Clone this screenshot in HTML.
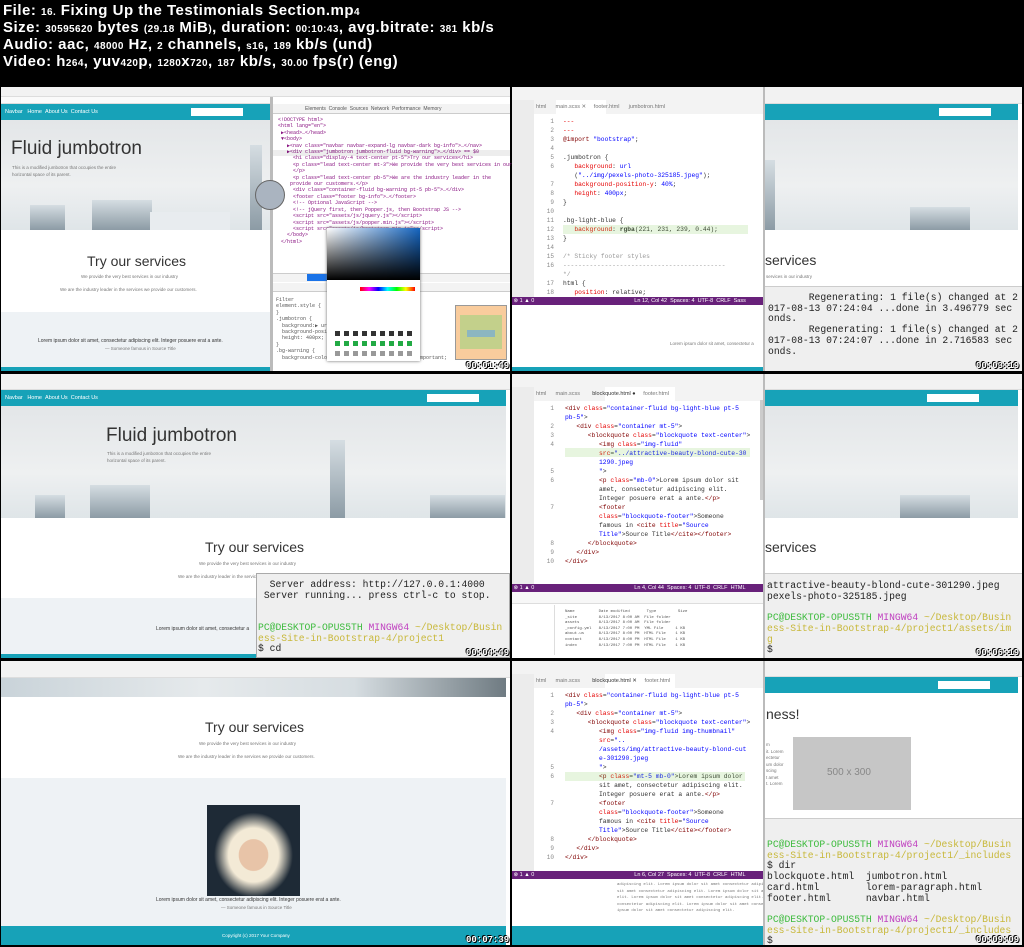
<!DOCTYPE html>
<html><head><meta charset="utf-8"><style>
*{margin:0;padding:0;box-sizing:border-box}
body{width:1024px;height:947px;background:#000;position:relative;overflow:hidden;font-family:"Liberation Sans",sans-serif}
.a{position:absolute}
.hd{color:#fff;font-weight:bold;font-size:15px;left:3px;white-space:nowrap;letter-spacing:0.5px}
.hd small{font-size:10px;letter-spacing:0.4px}
.w{background:#fff}
.tb{background:#f2f2f2;border-bottom:1px solid #ddd}
.teal{background:#17a2b8}
.grey{background:#eef2f5}
.code{font-family:"Liberation Mono",monospace;font-size:6.3px;line-height:9px;color:#333;white-space:pre}
.ln{font-family:"Liberation Mono",monospace;font-size:6px;line-height:9px;color:#888;text-align:right;white-space:pre}
.kw{color:#800000}.at{color:#e50000}.st{color:#0000ff}.tg{color:#800000}
.vs-act{background:#ececec}
.status{background:#68217a;color:#fff;font-size:5.5px;line-height:8px;white-space:nowrap}
.term{background:#efefef}
.tt{font-family:"Liberation Mono",monospace;font-size:9.7px;line-height:10.7px;color:#222;white-space:pre}
.g{color:#3dbb3d}.m{color:#c040c0}.y{color:#c8b83a}
.ts{color:#fff;font-family:"Liberation Mono",monospace;font-weight:bold;font-size:9px;text-shadow:0 0 1px #000,1px 1px 0 #000,-1px -1px 0 #000;white-space:nowrap}
.sky{background:linear-gradient(#e3e6e8,#eef0f1 60%,#dfe5e8)}
.city{background:linear-gradient(#d5dde2,#8c9ba5)}
.h1l{font-weight:300;color:#333}
.small{font-size:4.5px;color:#777;white-space:nowrap}
.nav{color:#fff;font-size:5px;white-space:nowrap}
.dv{font-family:"Liberation Mono",monospace;font-size:5px;line-height:6.4px;color:#881280;white-space:pre}
</style></head><body>

<div class="a hd" style="top:2px">File: <small>16.</small> Fixing Up the Testimonials Section.mp<small>4</small></div>
<div class="a hd" style="top:19px">Size: <small>30595620</small> bytes <small>(29.18</small> MiB<small>)</small>, duration: <small>00:10:43</small>, avg.bitrate: <small>381</small> kb/s</div>
<div class="a hd" style="top:36px">Audio: aac, <small>48000</small> Hz, <small>2</small> channels, <small>s16</small>, <small>189</small> kb/s (und)</div>
<div class="a hd" style="top:53px">Video: h<small>264</small>, yuv<small>420</small>p, <small>1280</small>x<small>720</small>, <small>187</small> kb/s, <small>30.00</small> fps(r) (eng)</div>

<!-- ===== Frame A ===== -->
<div class="a w" style="left:1px;top:87px;width:509px;height:284px"></div>
<div class="a tb" style="left:1px;top:87px;width:509px;height:10px"></div>
<div class="a" style="left:1px;top:97px;width:270px;height:7px;background:#fafafa;border-bottom:1px solid #ddd"></div>
<div class="a teal" style="left:1px;top:104px;width:269px;height:16px"></div>
<div class="a nav" style="left:5px;top:109px;font-size:5.5px">Navbar &nbsp;&nbsp;Home &nbsp;About Us &nbsp;Contact Us</div>
<div class="a w" style="left:191px;top:108px;width:52px;height:8px"></div>
<div class="a sky" style="left:1px;top:120px;width:269px;height:110px"></div>
<div class="a city" style="left:30px;top:205px;width:35px;height:25px"></div>
<div class="a city" style="left:92px;top:200px;width:60px;height:30px"></div>
<div class="a city" style="left:250px;top:145px;width:12px;height:85px"></div>
<div class="a" style="left:150px;top:212px;width:80px;height:18px;background:#e8ecef"></div>
<div class="a h1l" style="left:11px;top:138px;font-size:19px;white-space:nowrap">Fluid jumbotron</div>
<div class="a small" style="left:12px;top:165px">This is a modified jumbotron that occupies the entire</div>
<div class="a small" style="left:12px;top:172px">horizontal space of its parent.</div>
<div class="a h1l" style="left:87px;top:253px;font-size:14px;white-space:nowrap">Try our services</div>
<div class="a small" style="left:81px;top:274px">We provide the very best services in our industry</div>
<div class="a small" style="left:60px;top:287px">We are the industry leader in the services we provide our customers.</div>
<div class="a grey" style="left:1px;top:312px;width:269px;height:55px"></div>
<div class="a" style="left:38px;top:338px;font-size:5px;color:#333;white-space:nowrap">Lorem ipsum dolor sit amet, consectetur adipiscing elit. Integer posuere erat a ante.</div>
<div class="a small" style="left:105px;top:346px">— Someone famous in Source Title</div>
<div class="a teal" style="left:1px;top:367px;width:269px;height:4px"></div>
<div class="a" style="left:270px;top:97px;width:3px;height:274px;background:#bbb"></div>
<div class="a" style="left:273px;top:104px;width:237px;height:10px;background:#f3f3f3;border-bottom:1px solid #ccc"></div>
<div class="a nav" style="left:305px;top:106px;color:#555">Elements &nbsp;Console &nbsp;Sources &nbsp;Network &nbsp;Performance &nbsp;Memory</div>
<div class="a dv" style="left:278px;top:117px">&lt;!DOCTYPE html&gt;
&lt;html lang="en"&gt;
 ▶&lt;head&gt;…&lt;/head&gt;
 ▼&lt;body&gt;
   ▶&lt;nav class="navbar navbar-expand-lg navbar-dark bg-info"&gt;…&lt;/nav&gt;
   ▶&lt;div class="jumbotron jumbotron-fluid bg-warning"&gt;…&lt;/div&gt; == $0
     &lt;h1 class="display-4 text-center pt-5"&gt;Try our services&lt;/h1&gt;
     &lt;p class="lead text-center mt-3"&gt;We provide the very best services in our
     &lt;/p&gt;
     &lt;p class="lead text-center pb-5"&gt;We are the industry leader in the
    provide our customers.&lt;/p&gt;
     &lt;div class="container-fluid bg-warning pt-5 pb-5"&gt;…&lt;/div&gt;
     &lt;footer class="footer bg-info"&gt;…&lt;/footer&gt;
     &lt;!-- Optional JavaScript --&gt;
     &lt;!-- jQuery first, then Popper.js, then Bootstrap JS --&gt;
     &lt;script src="assets/js/jquery.js"&gt;&lt;/script&gt;
     &lt;script src="assets/js/popper.min.js"&gt;&lt;/script&gt;
     &lt;script src="assets/js/bootstrap.min.js"&gt;&lt;/script&gt;
   &lt;/body&gt;
 &lt;/html&gt;</div>
<div class="a" style="left:273px;top:150px;width:237px;height:6px;background:rgba(0,0,0,.07)"></div>
<div class="a" style="left:255px;top:180px;width:30px;height:30px;border-radius:50%;background:#aab4c0;border:1px solid #666"></div>
<div class="a" style="left:273px;top:273px;width:237px;height:9px;background:#f3f3f3;border-top:1px solid #ccc"></div>
<div class="a" style="left:307px;top:274px;width:20px;height:7px;background:#1a73e8"></div>
<div class="a" style="left:273px;top:283px;width:237px;height:9px;background:#f3f3f3;border-bottom:1px solid #ccc"></div>
<div class="a dv" style="left:276px;top:297px;color:#555">Filter
element.style {
}
.jumbotron {
  background:▶ url
  background-posit
  height: 400px;
}
.bg-warning {
  background-color: rgba(230, 234, 239, 0.44) !important;</div>
<div class="a" style="left:327px;top:228px;width:93px;height:133px;background:#fff;box-shadow:0 0 3px #666"></div>
<div class="a" style="left:327px;top:228px;width:93px;height:52px;background:linear-gradient(to top,#000,rgba(0,0,0,0)),linear-gradient(to right,#fff,#1565c0)"></div>
<div class="a" style="left:360px;top:287px;width:55px;height:4px;background:linear-gradient(to right,#f00,#f0f,#00f,#0ff,#0f0,#ff0,#f00)"></div>
<div class="a" style="left:335px;top:331px;width:80px;height:5px;background:repeating-linear-gradient(to right,#333 0 5px,transparent 5px 9px)"></div>
<div class="a" style="left:335px;top:341px;width:80px;height:5px;background:repeating-linear-gradient(to right,#2a4 0 5px,transparent 5px 9px)"></div>
<div class="a" style="left:335px;top:351px;width:80px;height:5px;background:repeating-linear-gradient(to right,#999 0 5px,transparent 5px 9px)"></div>
<div class="a" style="left:455px;top:305px;width:52px;height:55px;background:#f9cc9d;border:1px solid #999"></div>
<div class="a" style="left:460px;top:315px;width:42px;height:34px;background:#c3d08b"></div>
<div class="a" style="left:467px;top:330px;width:28px;height:7px;background:#8cb6c0"></div>
<div class="a ts" style="left:466px;top:361px">00:01:49</div>

<!-- ===== Frame B ===== -->
<div class="a w" style="left:512px;top:87px;width:510px;height:284px"></div>
<div class="a" style="left:512px;top:87px;width:251px;height:13px;background:#f3f3f3"></div>
<div class="a vs-act" style="left:512px;top:100px;width:22px;height:198px"></div>
<div class="a" style="left:534px;top:100px;width:229px;height:14px;background:#f3f3f3"></div>
<div class="a" style="left:556px;top:100px;width:50px;height:14px;background:#fff"></div>
<div class="a nav" style="left:536px;top:104px;color:#777;font-size:5.5px">html &nbsp;&nbsp;&nbsp;&nbsp;&nbsp;main.scss ✕ &nbsp;&nbsp;&nbsp;&nbsp;footer.html &nbsp;&nbsp;&nbsp;&nbsp;&nbsp;jumbotron.html</div>
<div class="a ln" style="left:540px;top:117px;width:14px">1
2
3
4
5
6

7
8
9
10
11
12
13
14
15
16

17
18</div>
<div class="a code" style="left:563px;top:117px"><span class="at">---</span>
<span class="at">---</span>
<span class="kw">@import</span> <span class="st">"bootstrap"</span>;

.jumbotron {
   <span class="at">background</span>: <span class="st">url</span>
   (<span class="st">"../img/pexels-photo-325185.jpeg"</span>);
   <span class="at">background-position-y</span>: <span class="st">40%</span>;
   <span class="at">height</span>: <span class="st">400px</span>;
}

.bg-light-blue {
   <span class="at">background</span>: <b>rgba</b>(221, 231, 239, 0.44);
}

<span style="color:#999">/* Sticky footer styles</span>
<span style="color:#999">-------------------------------------------</span>
<span style="color:#999">*/</span>
html {
   <span class="at">position</span>: relative;</div>
<div class="a" style="left:563px;top:225px;width:185px;height:9px;background:rgba(120,200,80,.18)"></div>
<div class="a status" style="left:512px;top:297px;width:251px;height:8px">&nbsp;⊗ 1 ▲ 0<span style="margin-left:100px">Ln 12, Col 42 &nbsp;Spaces: 4 &nbsp;UTF-8 &nbsp;CRLF &nbsp;Sass</span></div>
<div class="a small" style="left:670px;top:341px">Lorem ipsum dolor sit amet, consectetur a</div>
<div class="a teal" style="left:512px;top:367px;width:251px;height:4px"></div>
<div class="a" style="left:763px;top:87px;width:2px;height:284px;background:#bbb"></div>
<div class="a tb" style="left:765px;top:87px;width:257px;height:17px"></div>
<div class="a teal" style="left:765px;top:104px;width:253px;height:16px"></div>
<div class="a w" style="left:939px;top:108px;width:52px;height:8px"></div>
<div class="a sky" style="left:765px;top:120px;width:253px;height:110px"></div>
<div class="a city" style="left:910px;top:207px;width:60px;height:23px"></div>
<div class="a city" style="left:765px;top:160px;width:10px;height:70px"></div>
<div class="a h1l" style="left:765px;top:252px;font-size:14px">services</div>
<div class="a small" style="left:766px;top:274px">services in our industry</div>
<div class="a term" style="left:765px;top:286px;width:257px;height:85px;border-top:1px solid #ccc"></div>
<div class="a tt" style="left:768px;top:293px">       Regenerating: 1 file(s) changed at 2
017-08-13 07:24:04 ...done in 3.496779 sec
onds.
       Regenerating: 1 file(s) changed at 2
017-08-13 07:24:07 ...done in 2.716583 sec
onds.</div>
<div class="a ts" style="left:976px;top:361px">00:03:19</div>

<!-- ===== Frame C ===== -->
<div class="a w" style="left:1px;top:374px;width:509px;height:284px"></div>
<div class="a tb" style="left:1px;top:374px;width:509px;height:16px"></div>
<div class="a teal" style="left:1px;top:390px;width:505px;height:16px"></div>
<div class="a nav" style="left:5px;top:395px;font-size:5.5px">Navbar &nbsp;&nbsp;Home &nbsp;About Us &nbsp;Contact Us</div>
<div class="a w" style="left:427px;top:394px;width:52px;height:8px"></div>
<div class="a sky" style="left:1px;top:406px;width:505px;height:112px"></div>
<div class="a city" style="left:35px;top:495px;width:30px;height:23px"></div>
<div class="a city" style="left:90px;top:485px;width:60px;height:33px"></div>
<div class="a city" style="left:330px;top:440px;width:15px;height:78px"></div>
<div class="a city" style="left:430px;top:495px;width:75px;height:23px"></div>
<div class="a h1l" style="left:106px;top:425px;font-size:19px;white-space:nowrap">Fluid jumbotron</div>
<div class="a small" style="left:107px;top:451px">This is a modified jumbotron that occupies the entire</div>
<div class="a small" style="left:107px;top:458px">horizontal space of its parent.</div>
<div class="a h1l" style="left:205px;top:539px;font-size:14px;white-space:nowrap">Try our services</div>
<div class="a small" style="left:199px;top:561px">We provide the very best services in our industry</div>
<div class="a small" style="left:178px;top:574px">We are the industry leader in the services we provide our customers.</div>
<div class="a grey" style="left:1px;top:598px;width:505px;height:56px"></div>
<div class="a" style="left:156px;top:626px;font-size:5px;color:#333;white-space:nowrap">Lorem ipsum dolor sit amet, consectetur a</div>
<div class="a teal" style="left:1px;top:654px;width:505px;height:4px"></div>
<div class="a term" style="left:256px;top:573px;width:254px;height:85px;border:1px solid #aaa"></div>
<div class="a tt" style="left:258px;top:580px">  Server address: http://127.0.0.1:4000
 Server running... press ctrl-c to stop.


<span class="g">PC@DESKTOP-OPUS5TH</span> <span class="m">MINGW64</span> <span class="y">~/Desktop/Busin</span>
<span class="y">ess-Site-in-Bootstrap-4/project1</span>
$ cd</div>
<div class="a ts" style="left:466px;top:648px">00:04:49</div>

<!-- ===== Frame D ===== -->
<div class="a w" style="left:512px;top:374px;width:510px;height:284px"></div>
<div class="a" style="left:512px;top:374px;width:251px;height:13px;background:#f3f3f3"></div>
<div class="a vs-act" style="left:512px;top:387px;width:22px;height:198px"></div>
<div class="a" style="left:534px;top:387px;width:229px;height:14px;background:#f3f3f3"></div>
<div class="a" style="left:605px;top:387px;width:70px;height:14px;background:#fff"></div>
<div class="a nav" style="left:536px;top:391px;color:#777;font-size:5.5px">html &nbsp;&nbsp;&nbsp;&nbsp;&nbsp;main.scss &nbsp;&nbsp;&nbsp;&nbsp;&nbsp;&nbsp;&nbsp;<span style="color:#333">blockquote.html ●</span> &nbsp;&nbsp;&nbsp;&nbsp;footer.html</div>
<div class="a ln" style="left:540px;top:404px;width:14px">1

2
3
4


5
6


7



8
9
10</div>
<div class="a code" style="left:565px;top:404px"><span class="tg">&lt;div</span> <span class="at">class</span>=<span class="st">"container-fluid bg-light-blue pt-5</span>
<span class="st">pb-5"</span>&gt;
   <span class="tg">&lt;div</span> <span class="at">class</span>=<span class="st">"container mt-5"</span>&gt;
      <span class="tg">&lt;blockquote</span> <span class="at">class</span>=<span class="st">"blockquote text-center"</span>&gt;
         <span class="tg">&lt;img</span> <span class="at">class</span>=<span class="st">"img-fluid"</span>
         <span class="at">src</span>=<span class="st">"../attractive-beauty-blond-cute-30</span>
<span class="st">         1290.jpeg</span>
         <span class="st">"</span>&gt;
         <span class="tg">&lt;p</span> <span class="at">class</span>=<span class="st">"mb-0"</span>&gt;Lorem ipsum dolor sit
         amet, consectetur adipiscing elit.
         Integer posuere erat a ante.<span class="tg">&lt;/p&gt;</span>
         <span class="tg">&lt;footer</span>
         <span class="at">class</span>=<span class="st">"blockquote-footer"</span>&gt;Someone
         famous in <span class="tg">&lt;cite</span> <span class="at">title</span>=<span class="st">"Source</span>
<span class="st">         Title"</span>&gt;Source Title<span class="tg">&lt;/cite&gt;&lt;/footer&gt;</span>
      <span class="tg">&lt;/blockquote&gt;</span>
   <span class="tg">&lt;/div&gt;</span>
<span class="tg">&lt;/div&gt;</span></div>
<div class="a" style="left:565px;top:448px;width:185px;height:9px;background:rgba(120,200,80,.18)"></div>
<div class="a" style="left:760px;top:400px;width:3px;height:100px;background:#ccc"></div>
<div class="a status" style="left:512px;top:584px;width:251px;height:8px">&nbsp;⊗ 1 ▲ 0<span style="margin-left:100px">Ln 4, Col 44 &nbsp;Spaces: 4 &nbsp;UTF-8 &nbsp;CRLF &nbsp;HTML</span></div>
<div class="a" style="left:512px;top:592px;width:251px;height:66px;background:#fff;border-top:1px solid #ccc"></div>
<div class="a" style="left:512px;top:592px;width:251px;height:12px;background:#f7f7f7;border-bottom:1px solid #ddd"></div>
<div class="a" style="left:515px;top:605px;width:40px;height:50px;background:#fff;border-right:1px solid #ddd"></div>
<div class="a dv" style="left:565px;top:610px;color:#555;font-size:4px;line-height:5.6px">Name          Date modified       Type         Size
_site         8/13/2017 8:00 AM  File folder
assets        8/13/2017 8:00 AM  File folder
_config.yml   8/13/2017 7:00 PM  YML File     1 KB
about.us      8/13/2017 8:00 PM  HTML File    1 KB
contact       8/13/2017 8:00 PM  HTML File    1 KB
index         8/13/2017 7:00 PM  HTML File    1 KB</div>
<div class="a" style="left:763px;top:374px;width:2px;height:284px;background:#bbb"></div>
<div class="a tb" style="left:765px;top:374px;width:257px;height:16px"></div>
<div class="a teal" style="left:765px;top:390px;width:253px;height:16px"></div>
<div class="a w" style="left:927px;top:394px;width:52px;height:8px"></div>
<div class="a sky" style="left:765px;top:406px;width:253px;height:112px"></div>
<div class="a city" style="left:900px;top:495px;width:70px;height:23px"></div>
<div class="a h1l" style="left:765px;top:539px;font-size:14px">services</div>
<div class="a term" style="left:765px;top:573px;width:257px;height:85px;border-top:1px solid #ccc"></div>
<div class="a tt" style="left:767px;top:581px">attractive-beauty-blond-cute-301290.jpeg
pexels-photo-325185.jpeg

<span class="g">PC@DESKTOP-OPUS5TH</span> <span class="m">MINGW64</span> <span class="y">~/Desktop/Busin</span>
<span class="y">ess-Site-in-Bootstrap-4/project1/assets/im</span>
<span class="y">g</span>
$</div>
<div class="a ts" style="left:976px;top:648px">00:06:19</div>

<!-- ===== Frame E ===== -->
<div class="a w" style="left:1px;top:661px;width:509px;height:284px"></div>
<div class="a tb" style="left:1px;top:661px;width:509px;height:17px"></div>
<div class="a city" style="left:1px;top:678px;width:505px;height:19px;background:linear-gradient(90deg,#c9d3d9,#e6eaec 40%,#d6dde1 70%,#6f7b82)"></div>
<div class="a h1l" style="left:205px;top:719px;font-size:14px;white-space:nowrap">Try our services</div>
<div class="a small" style="left:199px;top:741px">We provide the very best services in our industry</div>
<div class="a small" style="left:178px;top:754px">We are the industry leader in the services we provide our customers.</div>
<div class="a grey" style="left:1px;top:778px;width:505px;height:148px"></div>
<div class="a" style="left:207px;top:805px;width:93px;height:91px;background:radial-gradient(ellipse at 50% 55%,#e8c4a8 0 22%,#f3ead6 23% 38%,#1e2a36 60%)"></div>
<div class="a" style="left:156px;top:897px;font-size:5px;color:#333;white-space:nowrap">Lorem ipsum dolor sit amet, consectetur adipiscing elit. Integer posuere erat a ante.</div>
<div class="a small" style="left:221px;top:905px">— Someone famous in Source Title</div>
<div class="a teal" style="left:1px;top:926px;width:505px;height:19px"></div>
<div class="a small" style="left:222px;top:933px;color:#fff">Copyright (c) 2017 Your Company</div>
<div class="a ts" style="left:466px;top:935px">00:07:39</div>

<!-- ===== Frame F ===== -->
<div class="a w" style="left:512px;top:661px;width:510px;height:284px"></div>
<div class="a" style="left:512px;top:661px;width:251px;height:13px;background:#f3f3f3"></div>
<div class="a vs-act" style="left:512px;top:674px;width:22px;height:198px"></div>
<div class="a" style="left:534px;top:674px;width:229px;height:14px;background:#f3f3f3"></div>
<div class="a" style="left:605px;top:674px;width:70px;height:14px;background:#fff"></div>
<div class="a nav" style="left:536px;top:678px;color:#777;font-size:5.5px">html &nbsp;&nbsp;&nbsp;&nbsp;&nbsp;main.scss &nbsp;&nbsp;&nbsp;&nbsp;&nbsp;&nbsp;&nbsp;<span style="color:#333">blockquote.html ✕</span> &nbsp;&nbsp;&nbsp;&nbsp;footer.html</div>
<div class="a ln" style="left:540px;top:691px;width:14px">1

2
3
4



5
6


7



8
9
10</div>
<div class="a code" style="left:565px;top:691px"><span class="tg">&lt;div</span> <span class="at">class</span>=<span class="st">"container-fluid bg-light-blue pt-5</span>
<span class="st">pb-5"</span>&gt;
   <span class="tg">&lt;div</span> <span class="at">class</span>=<span class="st">"container mt-5"</span>&gt;
      <span class="tg">&lt;blockquote</span> <span class="at">class</span>=<span class="st">"blockquote text-center"</span>&gt;
         <span class="tg">&lt;img</span> <span class="at">class</span>=<span class="st">"img-fluid img-thumbnail"</span>
         <span class="at">src</span>=<span class="st">"..</span>
<span class="st">         /assets/img/attractive-beauty-blond-cut</span>
<span class="st">         e-301290.jpeg</span>
         <span class="st">"</span>&gt;
         <span class="tg">&lt;p</span> <span class="at">class</span>=<span class="st">"mt-5 mb-0"</span>&gt;Lorem ipsum dolor
         sit amet, consectetur adipiscing elit.
         Integer posuere erat a ante.<span class="tg">&lt;/p&gt;</span>
         <span class="tg">&lt;footer</span>
         <span class="at">class</span>=<span class="st">"blockquote-footer"</span>&gt;Someone
         famous in <span class="tg">&lt;cite</span> <span class="at">title</span>=<span class="st">"Source</span>
<span class="st">         Title"</span>&gt;Source Title<span class="tg">&lt;/cite&gt;&lt;/footer&gt;</span>
      <span class="tg">&lt;/blockquote&gt;</span>
   <span class="tg">&lt;/div&gt;</span>
<span class="tg">&lt;/div&gt;</span></div>
<div class="a" style="left:565px;top:772px;width:180px;height:9px;background:rgba(120,200,80,.18)"></div>
<div class="a status" style="left:512px;top:871px;width:251px;height:8px">&nbsp;⊗ 1 ▲ 0<span style="margin-left:100px">Ln 6, Col 27 &nbsp;Spaces: 4 &nbsp;UTF-8 &nbsp;CRLF &nbsp;HTML</span></div>
<div class="a dv" style="left:617px;top:882px;color:#777;font-size:4px;line-height:6.5px">adipiscing elit. Lorem ipsum dolor sit amet consectetur adipiscing elit. Lorem
sit amet consectetur adipiscing elit. Lorem ipsum dolor sit amet consectetur
elit. Lorem ipsum dolor sit amet consectetur adipiscing elit. Lorem ipsum dolor
consectetur adipiscing elit. Lorem ipsum dolor sit amet consectetur adipiscing
ipsum dolor sit amet consectetur adipiscing elit.</div>
<div class="a teal" style="left:512px;top:926px;width:251px;height:19px"></div>
<div class="a" style="left:763px;top:661px;width:2px;height:284px;background:#bbb"></div>
<div class="a tb" style="left:765px;top:661px;width:257px;height:16px"></div>
<div class="a teal" style="left:765px;top:677px;width:253px;height:16px"></div>
<div class="a w" style="left:938px;top:681px;width:52px;height:8px"></div>
<div class="a h1l" style="left:766px;top:706px;font-size:14px">ness!</div>
<div class="a" style="left:793px;top:737px;width:118px;height:73px;background:#c6c6c6"></div>
<div class="a" style="left:827px;top:767px;font-size:10px;color:#888">500 x 300</div>
<div class="a small" style="left:766px;top:742px;line-height:6.5px;white-space:pre">m
it. Lorem
ectetur
um dolor
scing
t amet
t. Lorem</div>
<div class="a term" style="left:765px;top:818px;width:257px;height:127px;border-top:1px solid #ccc"></div>
<div class="a tt" style="left:767px;top:840px"><span class="g">PC@DESKTOP-OPUS5TH</span> <span class="m">MINGW64</span> <span class="y">~/Desktop/Busin</span>
<span class="y">ess-Site-in-Bootstrap-4/project1/_includes</span>
$ dir
blockquote.html  jumbotron.html
card.html        lorem-paragraph.html
footer.html      navbar.html

<span class="g">PC@DESKTOP-OPUS5TH</span> <span class="m">MINGW64</span> <span class="y">~/Desktop/Busin</span>
<span class="y">ess-Site-in-Bootstrap-4/project1/_includes</span>
$</div>
<div class="a ts" style="left:976px;top:935px">00:09:09</div>
</body></html>
